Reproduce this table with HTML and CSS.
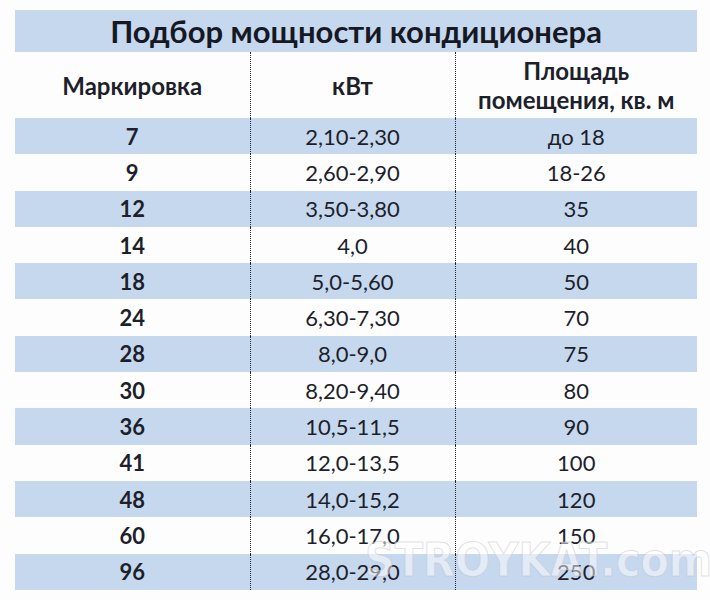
FILE: index.html
```html
<!DOCTYPE html>
<html lang="ru">
<head>
<meta charset="utf-8">
<title>Подбор мощности кондиционера</title>
<link rel="stylesheet" href="styles.css">
</head>
<body>
<div class="sheet">
  <div class="title">Подбор мощности кондиционера</div>
  <table class="grid">
    <colgroup><col class="c1"><col class="c2"><col class="c3"></colgroup>
    <thead>
      <tr class="head"><th>Маркировка</th><th>кВт</th><th>Площадь<br>помещения, кв. м</th></tr>
    </thead>
    <tbody>
      <tr class="odd"><td class="mark">7</td><td>2,10-2,30</td><td>до 18</td></tr>
      <tr><td class="mark">9</td><td>2,60-2,90</td><td>18-26</td></tr>
      <tr class="odd"><td class="mark">12</td><td>3,50-3,80</td><td>35</td></tr>
      <tr><td class="mark">14</td><td>4,0</td><td>40</td></tr>
      <tr class="odd"><td class="mark">18</td><td>5,0-5,60</td><td>50</td></tr>
      <tr><td class="mark">24</td><td>6,30-7,30</td><td>70</td></tr>
      <tr class="odd"><td class="mark">28</td><td>8,0-9,0</td><td>75</td></tr>
      <tr><td class="mark">30</td><td>8,20-9,40</td><td>80</td></tr>
      <tr class="odd"><td class="mark">36</td><td>10,5-11,5</td><td>90</td></tr>
      <tr><td class="mark">41</td><td>12,0-13,5</td><td>100</td></tr>
      <tr class="odd"><td class="mark">48</td><td>14,0-15,2</td><td>120</td></tr>
      <tr><td class="mark">60</td><td>16,0-17,0</td><td>150</td></tr>
      <tr class="odd"><td class="mark">96</td><td>28,0-29,0</td><td>250</td></tr>
    </tbody>
  </table>
  <div class="watermark">STROYKAT.com</div>
</div>
</body>
</html>
```
FILE: styles.css
```css
html, body {
  margin: 0;
  padding: 0;
  background: #fdfdfd;
}
body {
  font-family: "Lato", "Open Sans", sans-serif;
  color: #1d1f2b;
}
.sheet {
  position: relative;
  width: 682px;
  margin: 10px 0 0 15px;
}
.title {
  height: 42px;
  background: #c6d8ee;
  font-weight: 700;
  font-size: 31px;
  line-height: 42px;
  text-align: center;
  color: #161824;
}
.grid {
  width: 682px;
  border-collapse: collapse;
  table-layout: fixed;
}
.c1 { width: 235px; }
.c2 { width: 205px; }
.c3 { width: 242px; }
.grid th, .grid td {
  padding: 0;
  text-align: center;
  border-left: 1px dotted #2a2a2a;
}
.grid th:first-child, .grid td:first-child {
  border-left: none;
}
.head th {
  height: 66px;
  font-weight: 700;
  font-size: 24px;
  line-height: 29px;
}
.grid tbody td {
  height: 36.3px;
  font-size: 22px;
}
.grid tbody tr.odd td {
  background: #c6d8ee;
}
.grid td.mark {
  font-weight: 700;
}
.watermark {
  position: absolute;
  left: 350px;
  top: 523px;
  font-family: "DejaVu Sans Condensed", "DejaVu Sans", sans-serif;
  font-weight: 700;
  font-size: 46px;
  color: rgba(255, 255, 255, 0.5);
  -webkit-text-stroke: 1px rgba(190, 190, 200, 0.45);
  pointer-events: none;
}
```
